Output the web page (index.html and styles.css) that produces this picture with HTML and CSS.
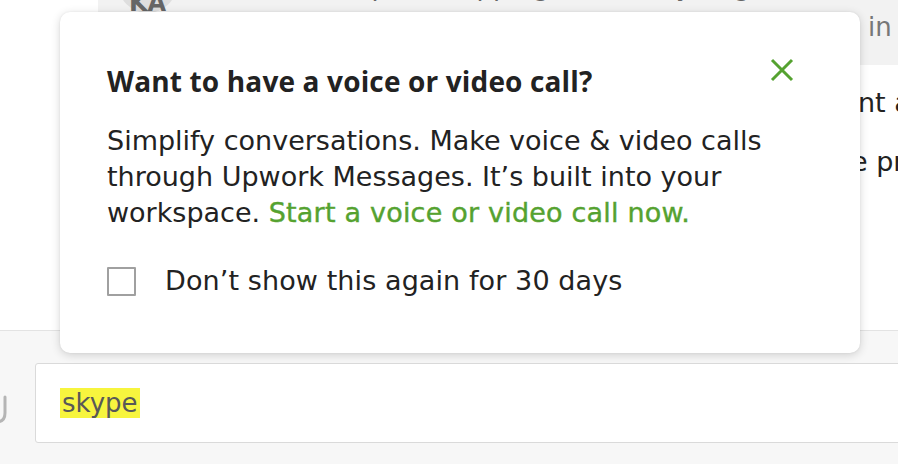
FILE: index.html
```html
<!DOCTYPE html>
<html lang="en">
<head>
<meta charset="utf-8">
<title>Messages</title>
<link rel="stylesheet" href="styles.css">
</head>
<body>
<div class="page">
  <div class="main">
    <div class="top">
      <div class="rail"></div>
      <div class="thread">
        <div class="thread-header">
          <div class="avatar"><span>KA</span></div>
          <div class="header-info">
            <div class="room-name">Website help — shopping cart ready to go, Kamini</div>
            <div class="room-meta"><span class="lead lead-meta">Kamini Agrawal · Local time 4:15 AM · Based</span>in India</div>
          </div>
        </div>
        <div class="thread-body">
          <p class="msg"><span class="lead lead-1">Hi, I have attached the files and the draft of the payme</span>nt and milestones</p>
          <p class="msg msg-2"><span class="lead lead-2">Let me know when you are ready to review th</span>e project scope</p>
        </div>
      </div>
    </div>
    <div class="composer">
      <svg class="attach" width="35" height="80" viewBox="0 0 35 80" aria-hidden="true"><path d="M5 34 V50 Q5 59 -4 59" fill="none" stroke="#b5b5b5" stroke-width="3" stroke-linecap="round"/></svg>
      <div class="input"><mark class="hl">skype</mark></div>
    </div>
  </div>

  <div class="popover" role="dialog" aria-label="Voice or video call">
    <div class="pop-head">
      <h2 class="pop-title">Want to have a voice or video call?</h2>
      <button class="pop-close" type="button" aria-label="Close">
        <svg width="24" height="24" viewBox="0 0 24 24"><path d="M2 2 L22 22 M22 2 L2 22" stroke="#55a230" stroke-width="3" fill="none"/></svg>
      </button>
    </div>
    <p class="pop-text">Simplify conversations. Make voice &amp; video calls through Upwork Messages. It’s built into your workspace. <a class="pop-link" href="#">Start a voice or video call now.</a></p>
    <label class="pop-check"><span class="box"></span><span class="check-label">Don’t show this again for 30 days</span></label>
  </div>
</div>
</body>
</html>
```

FILE: styles.css
```css
html, body {
  margin: 0;
  padding: 0;
  background: #ffffff;
}

.page {
  position: relative;
  width: 898px;
  height: 464px;
  overflow: hidden;
  font-family: "DejaVu Sans", "Liberation Sans", sans-serif;
  color: #222222;
}

.main {
  display: flex;
  flex-direction: column;
  height: 100%;
}

.top {
  display: flex;
  height: 330px;
  flex: none;
}

.rail {
  width: 98px;
  flex: none;
  background: #ffffff;
}

.thread {
  flex: 1;
  display: flex;
  flex-direction: column;
  min-width: 0;
}

.thread-header {
  height: 65px;
  flex: none;
  background: #f2f2f2;
  display: flex;
  align-items: flex-start;
  padding-left: 20px;
  overflow: visible;
}

.avatar {
  width: 59px;
  height: 59px;
  flex: none;
  margin-top: -46px;
  border-radius: 50%;
  background: #dedede;
  color: #666666;
  font-weight: 700;
  font-size: 24px;
  line-height: 1;
  display: flex;
  justify-content: center;
  align-items: flex-end;
}

.avatar span {
  margin-bottom: -2px;
}

.header-info {
  margin-left: 43px;
  margin-top: -32px;
  display: flex;
  flex-direction: column;
  white-space: nowrap;
}

.room-name {
  font-size: 26px;
  line-height: 36px;
  color: #666666;
}

.room-meta {
  font-size: 26px;
  line-height: 36px;
  color: #777777;
  margin-top: 5px;
}

.lead {
  display: inline-block;
  vertical-align: top;
  overflow: hidden;
  white-space: nowrap;
}

.lead-meta { width: 648px; }
.lead-1 { width: 638px; }
.lead-2 { width: 631px; }

.thread-body {
  flex: 1;
  background: #ffffff;
  padding: 20px 0 0 122px;
}

.msg {
  margin: 0;
  font-size: 27px;
  line-height: 36px;
  white-space: nowrap;
  color: #222222;
}

.msg-2 {
  margin-top: 23px;
}

.composer {
  flex: 1;
  display: flex;
  align-items: flex-start;
  background: #f7f7f7;
  border-top: 1px solid #e3e3e3;
  padding-top: 32px;
}

.attach {
  flex: none;
  display: block;
}

.input {
  flex: none;
  width: 880px;
  height: 80px;
  box-sizing: border-box;
  border: 1px solid #dadada;
  border-radius: 3px;
  background: #ffffff;
  display: flex;
  align-items: center;
  padding-left: 24px;
}

.hl {
  background: #f7f53e;
  color: #585858;
  font-size: 26px;
  line-height: 30px;
  padding: 0 2px;
}

/* Popover */
.popover {
  position: absolute;
  left: 60px;
  top: 12px;
  width: 800px;
  height: 341px;
  box-sizing: border-box;
  padding: 51px 66px 0 47px;
  background: #ffffff;
  border-radius: 10px;
  box-shadow: 0 2px 10px rgba(0, 0, 0, 0.16), 0 0 2px rgba(0, 0, 0, 0.08);
}

.pop-head {
  display: flex;
  justify-content: space-between;
  align-items: flex-start;
}

.pop-title {
  margin: 0;
  font-family: "Open Sans", "DejaVu Sans", sans-serif;
  font-weight: 700;
  font-size: 28px;
  letter-spacing: 0.15px;
  line-height: 36px;
  color: #222222;
}

.pop-close {
  margin: -5px 0 0 0;
  padding: 0;
  border: 0;
  background: none;
  width: 24px;
  height: 24px;
  cursor: pointer;
}

.pop-close svg {
  display: block;
}

.pop-text {
  margin: 24px 0 0 0;
  font-size: 27px;
  line-height: 36px;
  color: #222222;
}

.pop-link {
  color: #55a230;
  text-decoration: none;
  letter-spacing: 0.2px;
  -webkit-text-stroke: 0.4px #55a230;
}

.pop-check {
  display: flex;
  align-items: center;
  gap: 29px;
  margin-top: 32px;
  height: 36px;
}

.box {
  width: 29px;
  height: 29px;
  box-sizing: border-box;
  border: 2px solid #a0a0a0;
  border-radius: 1px;
  background: #ffffff;
  flex: none;
}

.check-label {
  font-size: 27px;
  letter-spacing: 0.1px;
  line-height: 36px;
  color: #222222;
}
```
